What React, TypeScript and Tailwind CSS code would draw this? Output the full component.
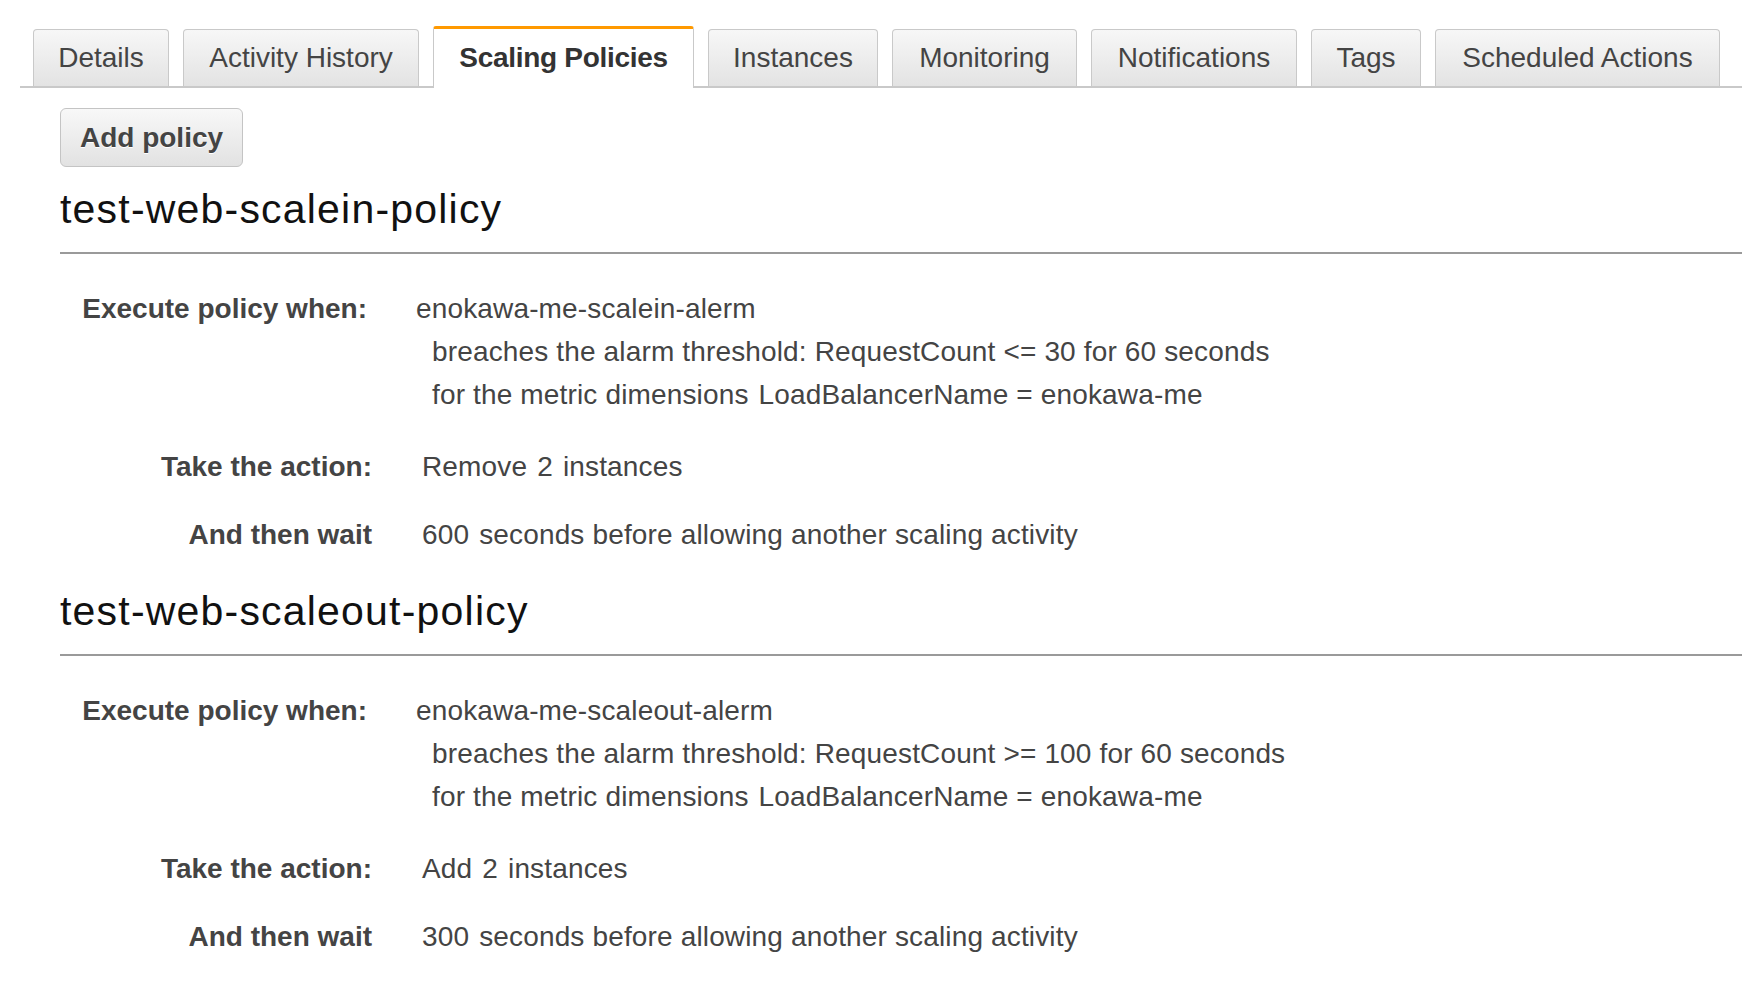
import React from "react";

const tabs = [
  { label: "Details", w: "w-[136px]" },
  { label: "Activity History", w: "w-[236px]" },
  { label: "Scaling Policies", w: "w-[261px]", active: true },
  { label: "Instances", w: "w-[170px]" },
  { label: "Monitoring", w: "w-[185px]" },
  { label: "Notifications", w: "w-[206px]" },
  { label: "Tags", w: "w-[110px]" },
  { label: "Scheduled Actions", w: "w-[285px]" },
];

type Policy = {
  name: string;
  alarm: string;
  threshold: string;
  action: string;
  wait: string;
};

const policies: Policy[] = [
  {
    name: "test-web-scalein-policy",
    alarm: "enokawa-me-scalein-alerm",
    threshold: "RequestCount <= 30 for 60 seconds",
    action: "Remove",
    wait: "600",
  },
  {
    name: "test-web-scaleout-policy",
    alarm: "enokawa-me-scaleout-alerm",
    threshold: "RequestCount >= 100 for 60 seconds",
    action: "Add",
    wait: "300",
  },
];

export default function App() {
  return (
    <div className="min-h-screen bg-white font-['Liberation_Sans',Arial,sans-serif] text-[28px] text-[#444]">
      {/* Tabs */}
      <div className="pt-[26px]">
        <div className="ml-[20px] flex items-end gap-[14px] border-b-2 border-[#c9c9c9] pl-[13px]">
          {tabs.map((t) =>
            t.active ? (
              <div
                key={t.label}
                className={`${t.w} -mb-[2px] flex h-[62px] items-center justify-center rounded-t-[3px] border-x border-t-[3px] border-x-[#c9c9c9] border-t-[#f90] bg-white pb-[2px] font-bold tracking-[-0.3px] text-[#333]`}
              >
                {t.label}
              </div>
            ) : (
              <div
                key={t.label}
                className={`${t.w} flex h-[57px] items-center justify-center rounded-t-[4px] border border-b-0 border-[#c9c9c9] bg-gradient-to-b from-[#f7f7f7] to-[#e3e3e3]`}
              >
                {t.label}
              </div>
            )
          )}
        </div>
      </div>

      <div className="pl-[60px]">
        <button className="mt-[20px] flex h-[59px] w-[183px] items-center justify-center rounded-[6px] border border-[#c4c4c4] bg-gradient-to-b from-[#f8f8f8] to-[#e2e2e2] font-bold text-[#444] [text-shadow:0_1px_0_#fff]">
          Add policy
        </button>

        {policies.map((p, i) => (
          <section key={p.name} className={i === 0 ? "mt-[18px]" : "mt-[31px]"}>
            <h2 className="border-b-2 border-[#9a9a9a] pb-[19px] text-[41px] leading-[48px] tracking-[1.2px] text-[#111]">
              {p.name}
            </h2>

            <div className="mt-[33px] flex leading-[43px]">
              <div className="w-[307px] text-right font-bold">Execute policy when:</div>
              <div className="ml-[49px] tracking-[0.15px]">
                <div>{p.alarm}</div>
                <div className="pl-[16px]">breaches the alarm threshold: {p.threshold}</div>
                <div className="pl-[16px]">
                  for the metric dimensions<span className="ml-[10px]">LoadBalancerName = enokawa-me</span>
                </div>
              </div>
            </div>

            <div className="mt-[29px] flex leading-[43px]">
              <div className="w-[312px] text-right font-bold">Take the action:</div>
              <div className="ml-[50px] tracking-[0.15px]">
                {p.action}
                <span className="ml-[10px]">2</span>
                <span className="ml-[10px]">instances</span>
              </div>
            </div>

            <div className="mt-[25px] flex leading-[43px]">
              <div className="w-[312px] text-right font-bold">And then wait</div>
              <div className="ml-[50px] tracking-[0.15px]">
                {p.wait}
                <span className="ml-[10px]">seconds before allowing another scaling activity</span>
              </div>
            </div>
          </section>
        ))}
      </div>
    </div>
  );
}
